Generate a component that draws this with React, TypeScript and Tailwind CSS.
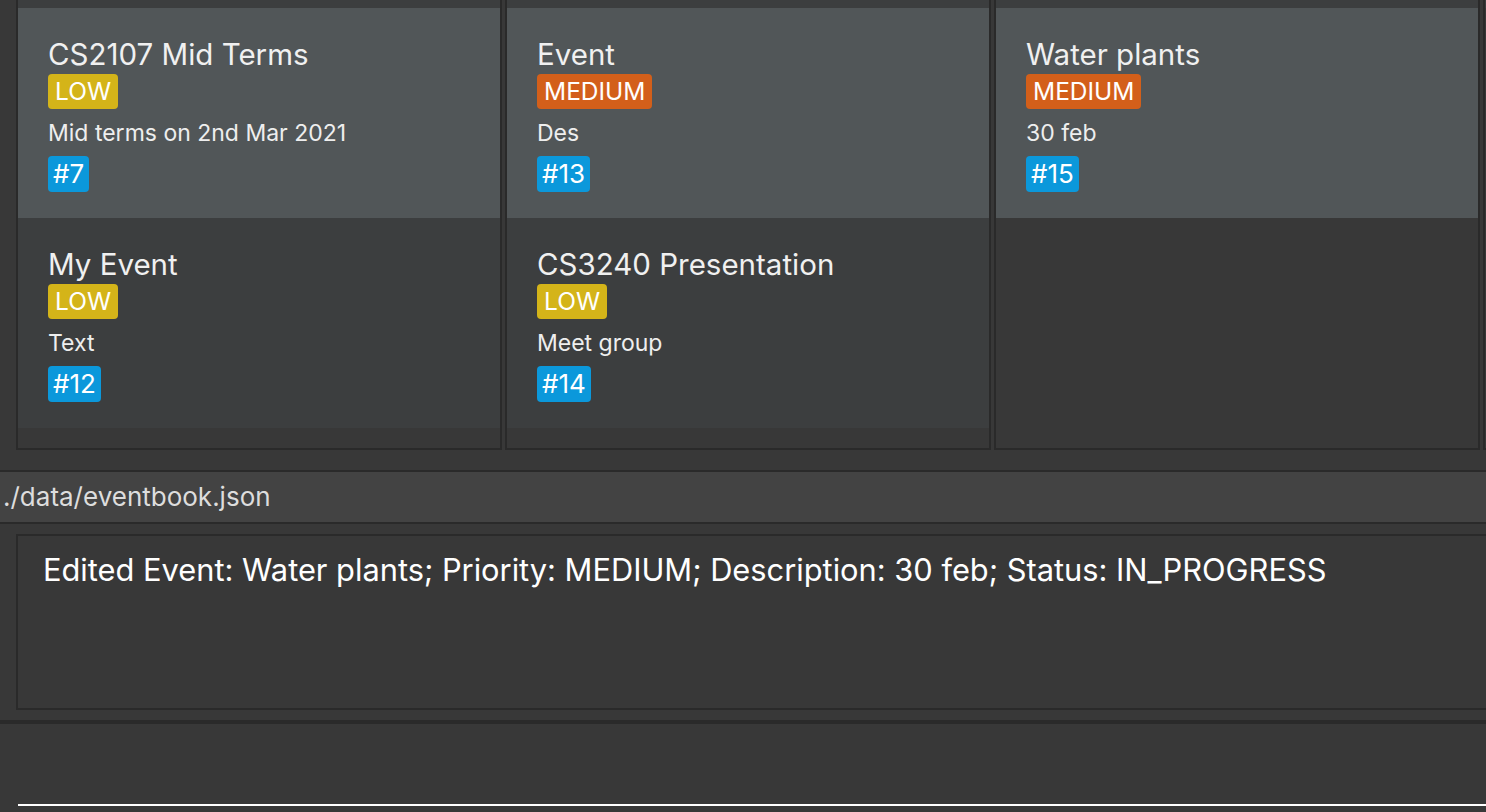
import React from "react";

type Ev = { title: string; priority: "LOW" | "MEDIUM"; desc: string; id: number };

const columns: Ev[][] = [
  [
    { title: "CS2107 Mid Terms", priority: "LOW", desc: "Mid terms on 2nd Mar 2021", id: 7 },
    { title: "My Event", priority: "LOW", desc: "Text", id: 12 },
  ],
  [
    { title: "Event", priority: "MEDIUM", desc: "Des", id: 13 },
    { title: "CS3240 Presentation", priority: "LOW", desc: "Meet group", id: 14 },
  ],
  [{ title: "Water plants", priority: "MEDIUM", desc: "30 feb", id: 15 }],
  [],
];

function EventCard({ ev, odd }: { ev: Ev; odd: boolean }) {
  return (
    <div className={`h-[210px] pl-[30px] pt-[28px] ${odd ? "bg-[#515658]" : "bg-[#3c3e3f]"}`}>
      <div className="text-[29.5px] leading-[36px] text-[#f0f0f0] whitespace-nowrap">{ev.title}</div>
      <div className="mt-[2px]">
        <span
          className={`inline-block h-[35px] px-[7px] rounded-[4px] text-[24.5px] leading-[35px] text-white ${
            ev.priority === "LOW" ? "bg-[#d4b419]" : "bg-[#d35f1a]"
          }`}
        >
          {ev.priority}
        </span>
      </div>
      <div className="mt-[9px] text-[23px] leading-[30px] text-[#eeeeee] whitespace-nowrap">{ev.desc}</div>
      <div className="mt-[8px]">
        <span className="inline-block h-[36px] px-[5px] rounded-[4px] bg-[#0b98db] text-[26px] leading-[36px] text-white">
          #{ev.id}
        </span>
      </div>
    </div>
  );
}

export default function App() {
  return (
    <div
      className="w-[1486px] h-[812px] overflow-hidden bg-[#383838] flex flex-col"
      style={{ fontFamily: "Inter, 'Noto Sans', sans-serif" }}
    >
      {/* Event columns */}
      <div className="flex gap-[3px] pl-[16px] h-[450px] shrink-0">
        {columns.map((col, i) => (
          <div
            key={i}
            className="w-[486px] shrink-0 h-full border-x-2 border-b-2 border-[#2a2a2a] bg-[#383838] flex flex-col"
          >
            <div className="h-[8px] bg-[#3c3e3f]" />
            {col.map((ev, j) => (
              <EventCard key={ev.id} ev={ev} odd={j % 2 === 0} />
            ))}
          </div>
        ))}
      </div>

      <div className="h-[20px] shrink-0" />

      {/* Status bar */}
      <div className="h-[54px] shrink-0 border-y-2 border-[#2a2a2a] bg-[#434343] pl-[3px] flex items-center">
        <span className="text-[26px] text-[#dddddd] leading-none">./data/eventbook.json</span>
      </div>

      {/* Result display */}
      <div className="pl-[16px] pt-[10px] shrink-0">
        <div className="w-[1490px] h-[176px] border-2 border-r-0 border-[#2a2a2a] bg-[#383838] pl-[25px] pt-[14px]">
          <div className="text-[30.8px] leading-[40px] text-white whitespace-nowrap">
            Edited Event: Water plants; Priority: MEDIUM; Description: 30 feb; Status: IN_PROGRESS
          </div>
        </div>
      </div>

      <div className="h-[10px] shrink-0" />
      <div className="h-[4px] shrink-0 bg-[#2a2a2a]" />

      {/* Command box */}
      <div className="flex-1 pl-[18px] pt-[80px]">
        <div className="h-[2px] bg-white" />
      </div>
    </div>
  );
}
